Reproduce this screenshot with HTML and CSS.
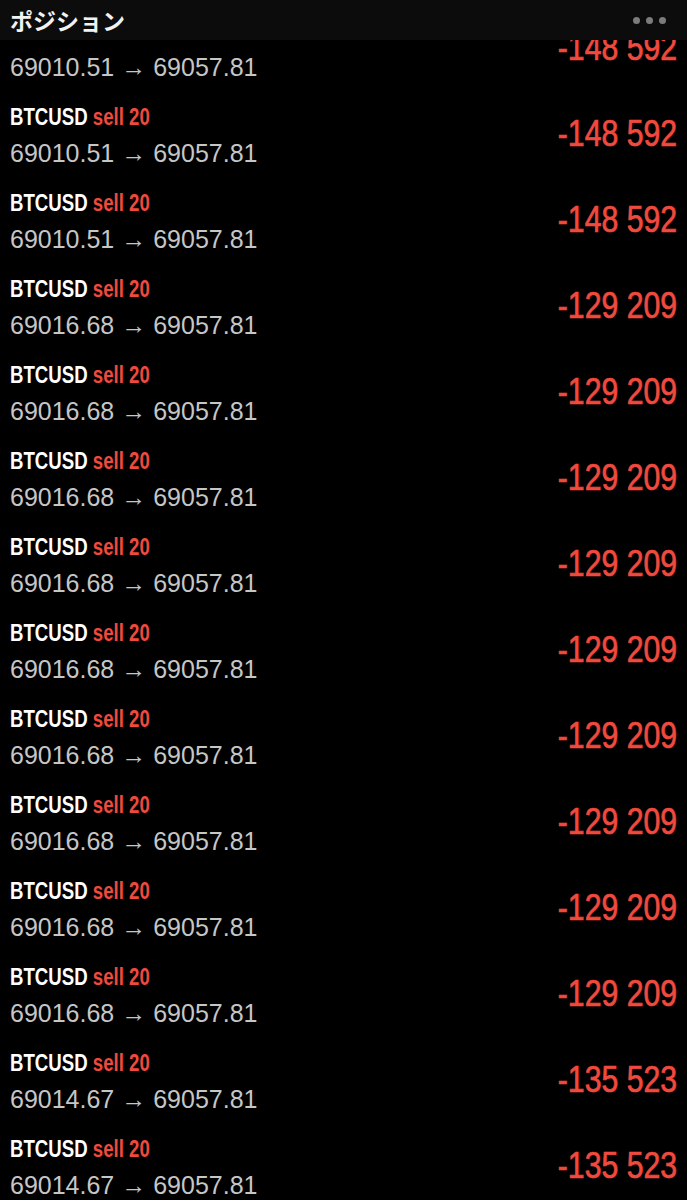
FILE: index.html
```html
<!DOCTYPE html>
<html lang="ja">
<head>
    <meta charset="UTF-8">
    <meta name="viewport" content="width=device-width, initial-scale=1.0">
    <title>ポジション</title>
    <link rel="stylesheet" href="styles.css">
</head>
<body>
    <div class="topbar">
        <span class="title">ポジション</span>
        <span class="dots"><i></i><i></i><i></i></span>
    </div>

    <div class="list">
        <div class="row">
            <div class="info">
                <div class="name">BTCUSD <span class="side">sell 20</span></div>
                <div class="price">69010.51 → 69057.81</div>
            </div>
            <div class="pl">-148 592</div>
        </div>
        <div class="row">
            <div class="info">
                <div class="name">BTCUSD <span class="side">sell 20</span></div>
                <div class="price">69010.51 → 69057.81</div>
            </div>
            <div class="pl">-148 592</div>
        </div>
        <div class="row">
            <div class="info">
                <div class="name">BTCUSD <span class="side">sell 20</span></div>
                <div class="price">69010.51 → 69057.81</div>
            </div>
            <div class="pl">-148 592</div>
        </div>
        <div class="row">
            <div class="info">
                <div class="name">BTCUSD <span class="side">sell 20</span></div>
                <div class="price">69016.68 → 69057.81</div>
            </div>
            <div class="pl">-129 209</div>
        </div>
        <div class="row">
            <div class="info">
                <div class="name">BTCUSD <span class="side">sell 20</span></div>
                <div class="price">69016.68 → 69057.81</div>
            </div>
            <div class="pl">-129 209</div>
        </div>
        <div class="row">
            <div class="info">
                <div class="name">BTCUSD <span class="side">sell 20</span></div>
                <div class="price">69016.68 → 69057.81</div>
            </div>
            <div class="pl">-129 209</div>
        </div>
        <div class="row">
            <div class="info">
                <div class="name">BTCUSD <span class="side">sell 20</span></div>
                <div class="price">69016.68 → 69057.81</div>
            </div>
            <div class="pl">-129 209</div>
        </div>
        <div class="row">
            <div class="info">
                <div class="name">BTCUSD <span class="side">sell 20</span></div>
                <div class="price">69016.68 → 69057.81</div>
            </div>
            <div class="pl">-129 209</div>
        </div>
        <div class="row">
            <div class="info">
                <div class="name">BTCUSD <span class="side">sell 20</span></div>
                <div class="price">69016.68 → 69057.81</div>
            </div>
            <div class="pl">-129 209</div>
        </div>
        <div class="row">
            <div class="info">
                <div class="name">BTCUSD <span class="side">sell 20</span></div>
                <div class="price">69016.68 → 69057.81</div>
            </div>
            <div class="pl">-129 209</div>
        </div>
        <div class="row">
            <div class="info">
                <div class="name">BTCUSD <span class="side">sell 20</span></div>
                <div class="price">69016.68 → 69057.81</div>
            </div>
            <div class="pl">-129 209</div>
        </div>
        <div class="row">
            <div class="info">
                <div class="name">BTCUSD <span class="side">sell 20</span></div>
                <div class="price">69016.68 → 69057.81</div>
            </div>
            <div class="pl">-129 209</div>
        </div>
        <div class="row">
            <div class="info">
                <div class="name">BTCUSD <span class="side">sell 20</span></div>
                <div class="price">69014.67 → 69057.81</div>
            </div>
            <div class="pl">-135 523</div>
        </div>
        <div class="row">
            <div class="info">
                <div class="name">BTCUSD <span class="side">sell 20</span></div>
                <div class="price">69014.67 → 69057.81</div>
            </div>
            <div class="pl">-135 523</div>
        </div>
    </div>
</body>
</html>
```

FILE: styles.css
```css
html, body{
    margin: 0;
    padding: 0;
    background-color: #000;
    height: 1200px;
    overflow: hidden;
}
body{
    font-family: "Liberation Sans", Arial, sans-serif;
    color: #fff;
}
.topbar{
    position: absolute;
    top: 0;
    left: 0;
    right: 0;
    height: 40px;
    background-color: #0c0c0c;
    display: flex;
    align-items: center;
    justify-content: space-between;
    padding: 0 21px 0 10px;
    z-index: 2;
}
.title{
    font-family: "Noto Sans CJK JP", sans-serif;
    font-weight: 700;
    font-size: 23px;
    color: #f2f2f2;
}
.dots{
    display: flex;
    gap: 6px;
    margin-top: 1px;
}
.dots i{
    width: 7px;
    height: 7px;
    border-radius: 50%;
    background-color: #7c7c7c;
}
.list{
    padding-top: 5px;
}
.row{
    height: 86px;
    display: flex;
    align-items: center;
    justify-content: space-between;
    padding: 0 10px;
}
.info{
    display: flex;
    flex-direction: column;
    gap: 6px;
}
.name{
    font-size: 23px;
    font-weight: 700;
    line-height: 32px;
    color: #fff;
    transform: scaleX(0.81);
    transform-origin: left center;
    white-space: nowrap;
}
.side{
    color: #ef4a3d;
}
.price{
    font-size: 25px;
    line-height: 28px;
    color: #c6c6c6;
}
.pl{
    font-size: 36px;
    color: #f04a3e;
    -webkit-text-stroke: 0.7px #f04a3e;
    transform: scaleX(0.84);
    transform-origin: right center;
    white-space: nowrap;
}
```
